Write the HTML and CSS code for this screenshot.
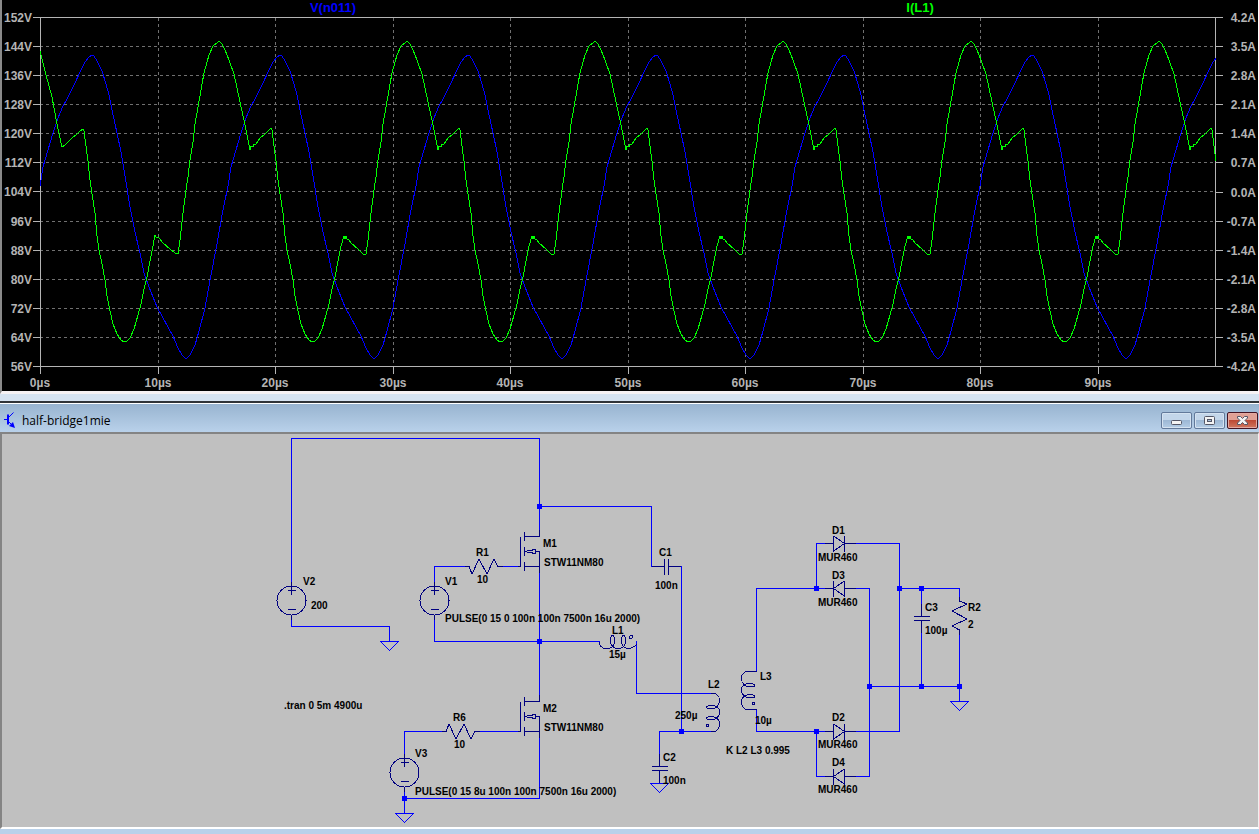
FILE: index.html
```html
<!DOCTYPE html>
<html lang="en">
<head>
  <meta charset="UTF-8" />
  <meta name="viewport" content="width=device-width,initial-scale=1.0">
  <title>half-bridge1mie</title>
  <link rel="stylesheet" href="styles.css">
</head>
<body>
  <section class="plot">
    <svg viewBox="2 0 1256 391" role="img" aria-label="Waveforms">
      <defs>
        <clipPath id="plot-area"><rect x="40" y="17" width="1176" height="350" /></clipPath>
        <!-- one 16us period of each trace -->
        <polyline id="voltage" points="40,186 43,167 48,150 53,133 58,118 63,106 66,101 73,87 82,68 85,62 89,57 92,55 94,56 97,61 102,71 106,84 109,95 112,110 117,133 121,152 126,182 130,207 135,232 140,253 144,273 149,287 153,297 157,307 163,318 173,336 178,348 182,355 185,358 187,358 190,355 195,345 199,331 205,308 211,275 217,244 222,215 228,186" />
        <polyline id="current" points="31,41 34,44 37,50 41,60 46,74 49,88 52,102 56,120 60,140 62,150 63,146 65,147 66,144 68,144 72,138 77,134 80,131 83,128 84,130 86,146 88,161 90,180 92,194 95,213 97,236 99,250 102,264 105,280 107,296 110,311 113,324 117,334 121,340 124,342 127,341 130,338 134,329 138,315 141,304 144,289 147,277 150,261 153,246 156,236 157,239 158,236 159,239 161,240 163,243 170,249 175,254 178,254 180,240 183,213 186,190 188,177 190,160 193,142 195,124 198,107 201,90 204,73 209,55 213,46 217,43 219,41" />
      </defs>

      <path class="grid" d="M40 46.5H1215M40 75.5H1215M40 104.5H1215M40 133.5H1215M40 162.5H1215M40 191.5H1215M40 221.5H1215M40 250.5H1215M40 279.5H1215M40 308.5H1215M40 337.5H1215" />
      <path class="grid" d="M158.5 18V366M275.5 18V366M393.5 18V366M510.5 18V366M628.5 18V366M745.5 18V366M863.5 18V366M980.5 18V366M1098.5 18V366" />
      <path class="axis" d="M33 17.5H1223M33 366.5H1223M40.5 17V374M1215.5 17V366" />
      <path class="axis" d="M33 46.5H40M33 75.5H40M33 104.5H40M33 133.5H40M33 162.5H40M33 191.5H40M33 221.5H40M33 250.5H40M33 279.5H40M33 308.5H40M33 337.5H40" />
      <path class="axis" d="M1215 46.5H1223M1215 75.5H1223M1215 104.5H1223M1215 133.5H1223M1215 162.5H1223M1215 192.5H1223M1215 221.5H1223M1215 250.5H1223M1215 279.5H1223M1215 308.5H1223M1215 337.5H1223" />
      <path class="axis" d="M158.5 366V374M275.5 366V374M393.5 366V374M510.5 366V374M628.5 366V374M745.5 366V374M863.5 366V374M980.5 366V374M1098.5 366V374" />

      <g clip-path="url(#plot-area)">
        <g class="trace-voltage">
          <use href="#voltage" />
          <use href="#voltage" x="188" />
          <use href="#voltage" x="376" />
          <use href="#voltage" x="564" />
          <use href="#voltage" x="752" />
          <use href="#voltage" x="940" />
          <use href="#voltage" x="1128" />
        </g>
        <g class="trace-current">
          <polyline points="40,51 43,63 46,75 49,86 52,97 54,108 57,124 60,138 62,147 65,145 72,138 77,134 80,131 83,129 84,131 86,146 88,161 90,180 92,194 95,213 97,236 99,250 102,264 105,280 107,296 110,311 113,324 117,334 121,340 124,342 127,341 130,338 134,329 138,315 141,304 144,289 147,277 150,261 153,246 155,235 156,237 159,238 163,243 170,249 175,253 178,254 180,240 183,213 186,190 188,177 190,160 193,142 195,124 198,107 201,90 204,73 209,55 213,46 217,43 219,41" />
          <use href="#current" x="188" />
          <use href="#current" x="376" />
          <use href="#current" x="564" />
          <use href="#current" x="752" />
          <use href="#current" x="940" />
          <use href="#current" x="1128" />
        </g>
      </g>

      <text class="trace-name voltage" x="333" y="12">V(n011)</text>
      <text class="trace-name current" x="920" y="12">I(L1)</text>

      <g class="labels left">
        <text x="32" y="22">152V</text>
        <text x="32" y="51">144V</text>
        <text x="32" y="80">136V</text>
        <text x="32" y="109">128V</text>
        <text x="32" y="138">120V</text>
        <text x="32" y="167">112V</text>
        <text x="32" y="196">104V</text>
        <text x="32" y="226">96V</text>
        <text x="32" y="255">88V</text>
        <text x="32" y="284">80V</text>
        <text x="32" y="313">72V</text>
        <text x="32" y="342">64V</text>
        <text x="32" y="371">56V</text>
      </g>
      <g class="labels right">
        <text x="1256" y="22">4.2A</text>
        <text x="1256" y="51">3.5A</text>
        <text x="1256" y="80">2.8A</text>
        <text x="1256" y="109">2.1A</text>
        <text x="1256" y="138">1.4A</text>
        <text x="1256" y="167">0.7A</text>
        <text x="1256" y="197">0.0A</text>
        <text x="1256" y="226">-0.7A</text>
        <text x="1256" y="255">-1.4A</text>
        <text x="1256" y="284">-2.1A</text>
        <text x="1256" y="313">-2.8A</text>
        <text x="1256" y="342">-3.5A</text>
        <text x="1256" y="371">-4.2A</text>
      </g>
      <g class="labels time">
        <text x="40" y="387">0µs</text>
        <text x="158" y="387">10µs</text>
        <text x="275" y="387">20µs</text>
        <text x="393" y="387">30µs</text>
        <text x="510" y="387">40µs</text>
        <text x="628" y="387">50µs</text>
        <text x="745" y="387">60µs</text>
        <text x="863" y="387">70µs</text>
        <text x="980" y="387">80µs</text>
        <text x="1098" y="387">90µs</text>
      </g>
    </svg>
  </section>

  <main class="window">
    <header class="titlebar">
      <svg class="app-icon" viewBox="0 0 12 16" aria-hidden="true">
        <path d="M0 7.5H4M9.5 .5L4.5 5.5M4.5 9.5L10 15" />
        <path class="base" d="M4 2.5V12.5" />
        <path class="arrow" d="M11 16L5 14L9 10Z" />
      </svg>
      <h1>half-bridge1mie</h1>
      <div class="controls">
        <button type="button" aria-label="Minimize">
          <svg viewBox="0 0 13 11"><rect x="1.5" y="5.5" width="10" height="4" rx="1" /></svg>
        </button>
        <button type="button" aria-label="Restore">
          <svg viewBox="0 0 13 11"><rect x="1.5" y="1.5" width="10" height="8" rx="1" /><rect class="hole" x="4.5" y="4.5" width="4" height="2" /></svg>
        </button>
        <button type="button" class="close" aria-label="Close">
          <svg viewBox="0 0 13 11"><path d="M1.5 1.5H4.5L6.5 3.5L8.5 1.5H11.5V3L9 5.5L11.5 8V9.5H8.5L6.5 7.5L4.5 9.5H1.5V8L4 5.5L1.5 3Z" /></svg>
        </button>
      </div>
    </header>

    <div class="schematic">
      <svg viewBox="2 434 1256 393" role="img" aria-label="Half bridge schematic">
        <defs>
          <g id="source">
            <circle cx=".5" cy=".5" r="14.5" />
            <path d="M.5 -18V-5M-3 -9.5H5M-3 9.5H5M.5 15V20" />
          </g>
          <!-- origin at the drain corner -->
          <g id="mosfet">
            <path d="M.5 -6V.5H-15M-14.5 -4V5M-14.5 11V20M-14.5 26V35M-18.5 .5V30.5H-21M-14.5 30.5H.5M.5 37V15.5H-3" />
            <path d="M-14.5 15.5H-12.5M-12.5 14.5H-6.5V13.5H-3.5V17.5H-6.5V16.5H-12.5" />
          </g>
          <path id="diode" d="M-14 .5H-6M6 .5H17M-5.5 -7V8L5.5 .5L-5.5 -7M5.5 -7V9" />
          <path id="diode-left" d="M-14 .5H-6M6 .5H17M5.5 -7V8L-5.5 .5L5.5 -7M-5.5 -7V9" />
          <g id="coil">
            <path d="M0 0H2C6 0 8.5 3 8.5 7C8.5 12 5 15.5 0 15.5C-3 15.5 -4.5 15 -4.5 14C-4.5 13 -3 12 0 12C5 12 8.5 14 8.5 18.5C8.5 23 5 26.5 0 26.5C-3 26.5 -4.5 26 -4.5 25C-4.5 24 -3 23 0 23C5 23 8.5 26 8.5 30C8.5 35 6 38 2 38H0" />
            <ellipse cx="-3.5" cy="32" rx="1" ry="1.5" />
          </g>
          <path id="ground" d="M-9 .5H9.5L.5 9.5L-8.5 .5" />
          <path id="resistor" d="M-18 .5H-14L-11 8L-4 -7L4 8L11 -7L15 .5H20" />
          <path id="capacitor" d="M.5 -14V-2M-7 -1.5H9M-7 2.5H9M.5 3V15" />
          <rect id="node" x="-2" y="-2" width="5" height="5" />
        </defs>

        <path class="wire" d="M291.5 582V438.5H539.5V530M291.5 620V626.5H389.5V641
          M434.5 582V566.5H466M501 566.5H519M434.5 620V641.5H599.5
          M539.5 506.5H651.5V566.5H656M676 566.5H681.5V731.5
          M539.5 573V695M636.5 641V693.5H712M712 731.5H659.5V755
          M404.5 754V731.5H443M479 731.5H519M539.5 738V798.5H404.5M404.5 792V813
          M756.5 671V588.5H825M756.5 709V731.5H825M816.5 588V543.5H825M856 543.5H899.5V731.5H856
          M856 588.5H869.5V776.5H856M825 776.5H816.5V731M899 588.5H959.5V598M921.5 588V606
          M921.5 632V686M959.5 633V701M869 686.5H960" />

        <g class="part">
          <use href="#source" x="291" y="600" />
          <use href="#source" x="434" y="600" />
          <use href="#source" x="404" y="772" />
          <use href="#mosfet" x="539" y="536" />
          <use href="#mosfet" x="539" y="701" />
          <use href="#resistor" x="483" y="566" />
          <use href="#resistor" transform="translate(460 732) scale(1 -1)" />
          <use href="#resistor" transform="matrix(0 1 1 0 959 615)" />
          <use href="#capacitor" x="659" y="768" />
          <use href="#capacitor" x="921" y="618" />
          <use href="#capacitor" transform="matrix(0 1 1 0 666 566)" />
          <use href="#diode" x="839" y="543" />
          <use href="#diode-left" x="839" y="588" />
          <use href="#diode" x="839" y="731" />
          <use href="#diode-left" x="839" y="776" />
          <use href="#coil" x="711" y="693.5" />
          <use href="#coil" transform="translate(750 671.5) scale(-1 1)" />
          <path d="M749 671.5H757M749 709.5H757" />
          <path d="M599.5 641.5V644.5C602 648.5 604 648.5 607.5 648.5C612 648.5 614.5 645 614.5 641C614.5 637 613.5 635.5 612.5 635.5C611 635.5 610.5 638 610.5 641C610.5 645 613.5 648.5 618 648.5C623 648.5 625.5 645 625.5 641C625.5 637 624.5 635.5 623.5 635.5C622 635.5 621.5 638 621.5 641C621.5 645 624 648.5 628.5 648.5C632 648.5 634 647 636.5 644.5" />
          <circle cx="631" cy="637" r="1.5" />
        </g>

        <g class="wire">
          <use href="#ground" x="389" y="641" />
          <use href="#ground" x="404" y="813" />
          <use href="#ground" x="659" y="783" />
          <use href="#ground" x="959" y="701" />
        </g>

        <g class="nodes">
          <use href="#node" x="539" y="506" />
          <use href="#node" x="539" y="641" />
          <use href="#node" x="404" y="798" />
          <use href="#node" x="681" y="731" />
          <use href="#node" x="816" y="588" />
          <use href="#node" x="816" y="731" />
          <use href="#node" x="899" y="588" />
          <use href="#node" x="921" y="588" />
          <use href="#node" x="869" y="686" />
          <use href="#node" x="921" y="686" />
          <use href="#node" x="959" y="686" />
        </g>

        <g class="notes">
          <text x="303" y="585">V2</text>
          <text x="311" y="609">200</text>
          <text x="445" y="585">V1</text>
          <text x="445" y="622">PULSE(0 15 0 100n 100n 7500n 16u 2000)</text>
          <text x="476" y="556">R1</text>
          <text x="477" y="583">10</text>
          <text x="543" y="547">M1</text>
          <text x="544" y="566">STW11NM80</text>
          <text x="659" y="556">C1</text>
          <text x="655" y="589">100n</text>
          <text x="612" y="634">L1</text>
          <text x="609" y="658">15µ</text>
          <text x="284" y="709">.tran 0 5m 4900u</text>
          <text x="453" y="721">R6</text>
          <text x="454" y="748">10</text>
          <text x="543" y="712">M2</text>
          <text x="544" y="731">STW11NM80</text>
          <text x="415" y="757">V3</text>
          <text x="415" y="795">PULSE(0 15 8u 100n 100n 7500n 16u 2000)</text>
          <text x="708" y="688">L2</text>
          <text x="675" y="719">250µ</text>
          <text x="760" y="680">L3</text>
          <text x="755" y="724">10µ</text>
          <text x="663" y="761">C2</text>
          <text x="663" y="784">100n</text>
          <text x="726" y="754">K L2 L3 0.995</text>
          <text x="832" y="534">D1</text>
          <text x="818" y="561">MUR460</text>
          <text x="832" y="579">D3</text>
          <text x="818" y="606">MUR460</text>
          <text x="832" y="721">D2</text>
          <text x="818" y="748">MUR460</text>
          <text x="832" y="766">D4</text>
          <text x="818" y="793">MUR460</text>
          <text x="925" y="611">C3</text>
          <text x="925" y="634">100µ</text>
          <text x="968" y="611">R2</text>
          <text x="968" y="628">2</text>
        </g>
      </svg>
    </div>
  </main>
</body>
</html>
```
FILE: styles.css
```css
body {
  margin: 0;
  background-color: #b9d1ea;
  font-family: "Liberation Sans", Arial, sans-serif;
}

svg {
  display: block;
  width: 100%;
}

.plot {
  background-color: #000;
  border-left: 2px solid #8a8a8a;
  border-right: 1px solid #fff;
  border-bottom: 3px solid #f6f2f4;
}

.grid, .axis, .trace-voltage, .trace-current {
  fill: none;
  stroke-width: 1;
  shape-rendering: crispEdges;
}

.grid {
  stroke: #707070;
  stroke-dasharray: 3 3;
}

.axis { stroke: #b4b4b4; }
.trace-voltage { stroke: #0000ff; }
.trace-current { stroke: #00ff00; }

.labels, .trace-name {
  font-size: 12px;
  font-weight: bold;
  fill: #b4b4b4;
}

.left, .right { text-anchor: end; }
.time, .trace-name { text-anchor: middle; }
.trace-name { font-size: 13px; }
.voltage { fill: #0000ff; }
.current { fill: #00ff00; }

.window {
  border-top: 7px solid #d6e3f1;
}

.titlebar {
  display: flex;
  align-items: center;
  box-sizing: border-box;
  height: 31px;
  padding: 0 1px 0 4px;
  border-top: 2px solid #303438;
  background: linear-gradient(#fff 1px, #98b4d0 1px, #b9d1ea);
}

.titlebar h1 {
  flex: 1;
  margin: 6px 0 0 6px;
  font: 12px/20px "Open Sans", "Segoe UI", sans-serif;
  color: #000;
}

.app-icon {
  width: 12px;
  height: 16px;
  margin-top: 4px;
  fill: none;
  stroke: #0000ff;
}

.app-icon .base { stroke-width: 2; }

.app-icon .arrow {
  fill: #0000ff;
  stroke: none;
}

.controls {
  display: flex;
  gap: 2px;
  margin-top: 6px;
}

.controls button {
  display: flex;
  align-items: center;
  justify-content: center;
  width: 31px;
  height: 17px;
  padding: 0;
  border: 1px solid #62799a;
  border-radius: 2px;
  background: linear-gradient(#c3d6ea 50%, #9db8d5 50%, #b4cde6);
  box-shadow: inset 0 0 0 1px #d5e3f1;
}

.controls svg {
  width: 13px;
  height: 11px;
  fill: #f4f4f4;
  stroke: #535666;
}

.controls .hole { fill: #a8c0da; }

.controls .close {
  border-color: #431422;
  background: linear-gradient(#e0a195 50%, #bd4a35 50%, #d07860);
  box-shadow: inset 0 0 0 1px #e3aaa2;
}

.schematic {
  background-color: #c0c0c0;
  border-top: 2px solid #848484;
  border-left: 2px solid #848484;
  border-right: 1px solid #f0f0f0;
  border-bottom: 2px solid #fff;
}

.wire, .part {
  fill: none;
  stroke: #0000ff;
  shape-rendering: crispEdges;
}

.part { stroke: #000080; }

.nodes {
  fill: #0000ff;
  shape-rendering: crispEdges;
}

.notes {
  font-size: 10px;
  font-weight: bold;
  fill: #000;
}
```
